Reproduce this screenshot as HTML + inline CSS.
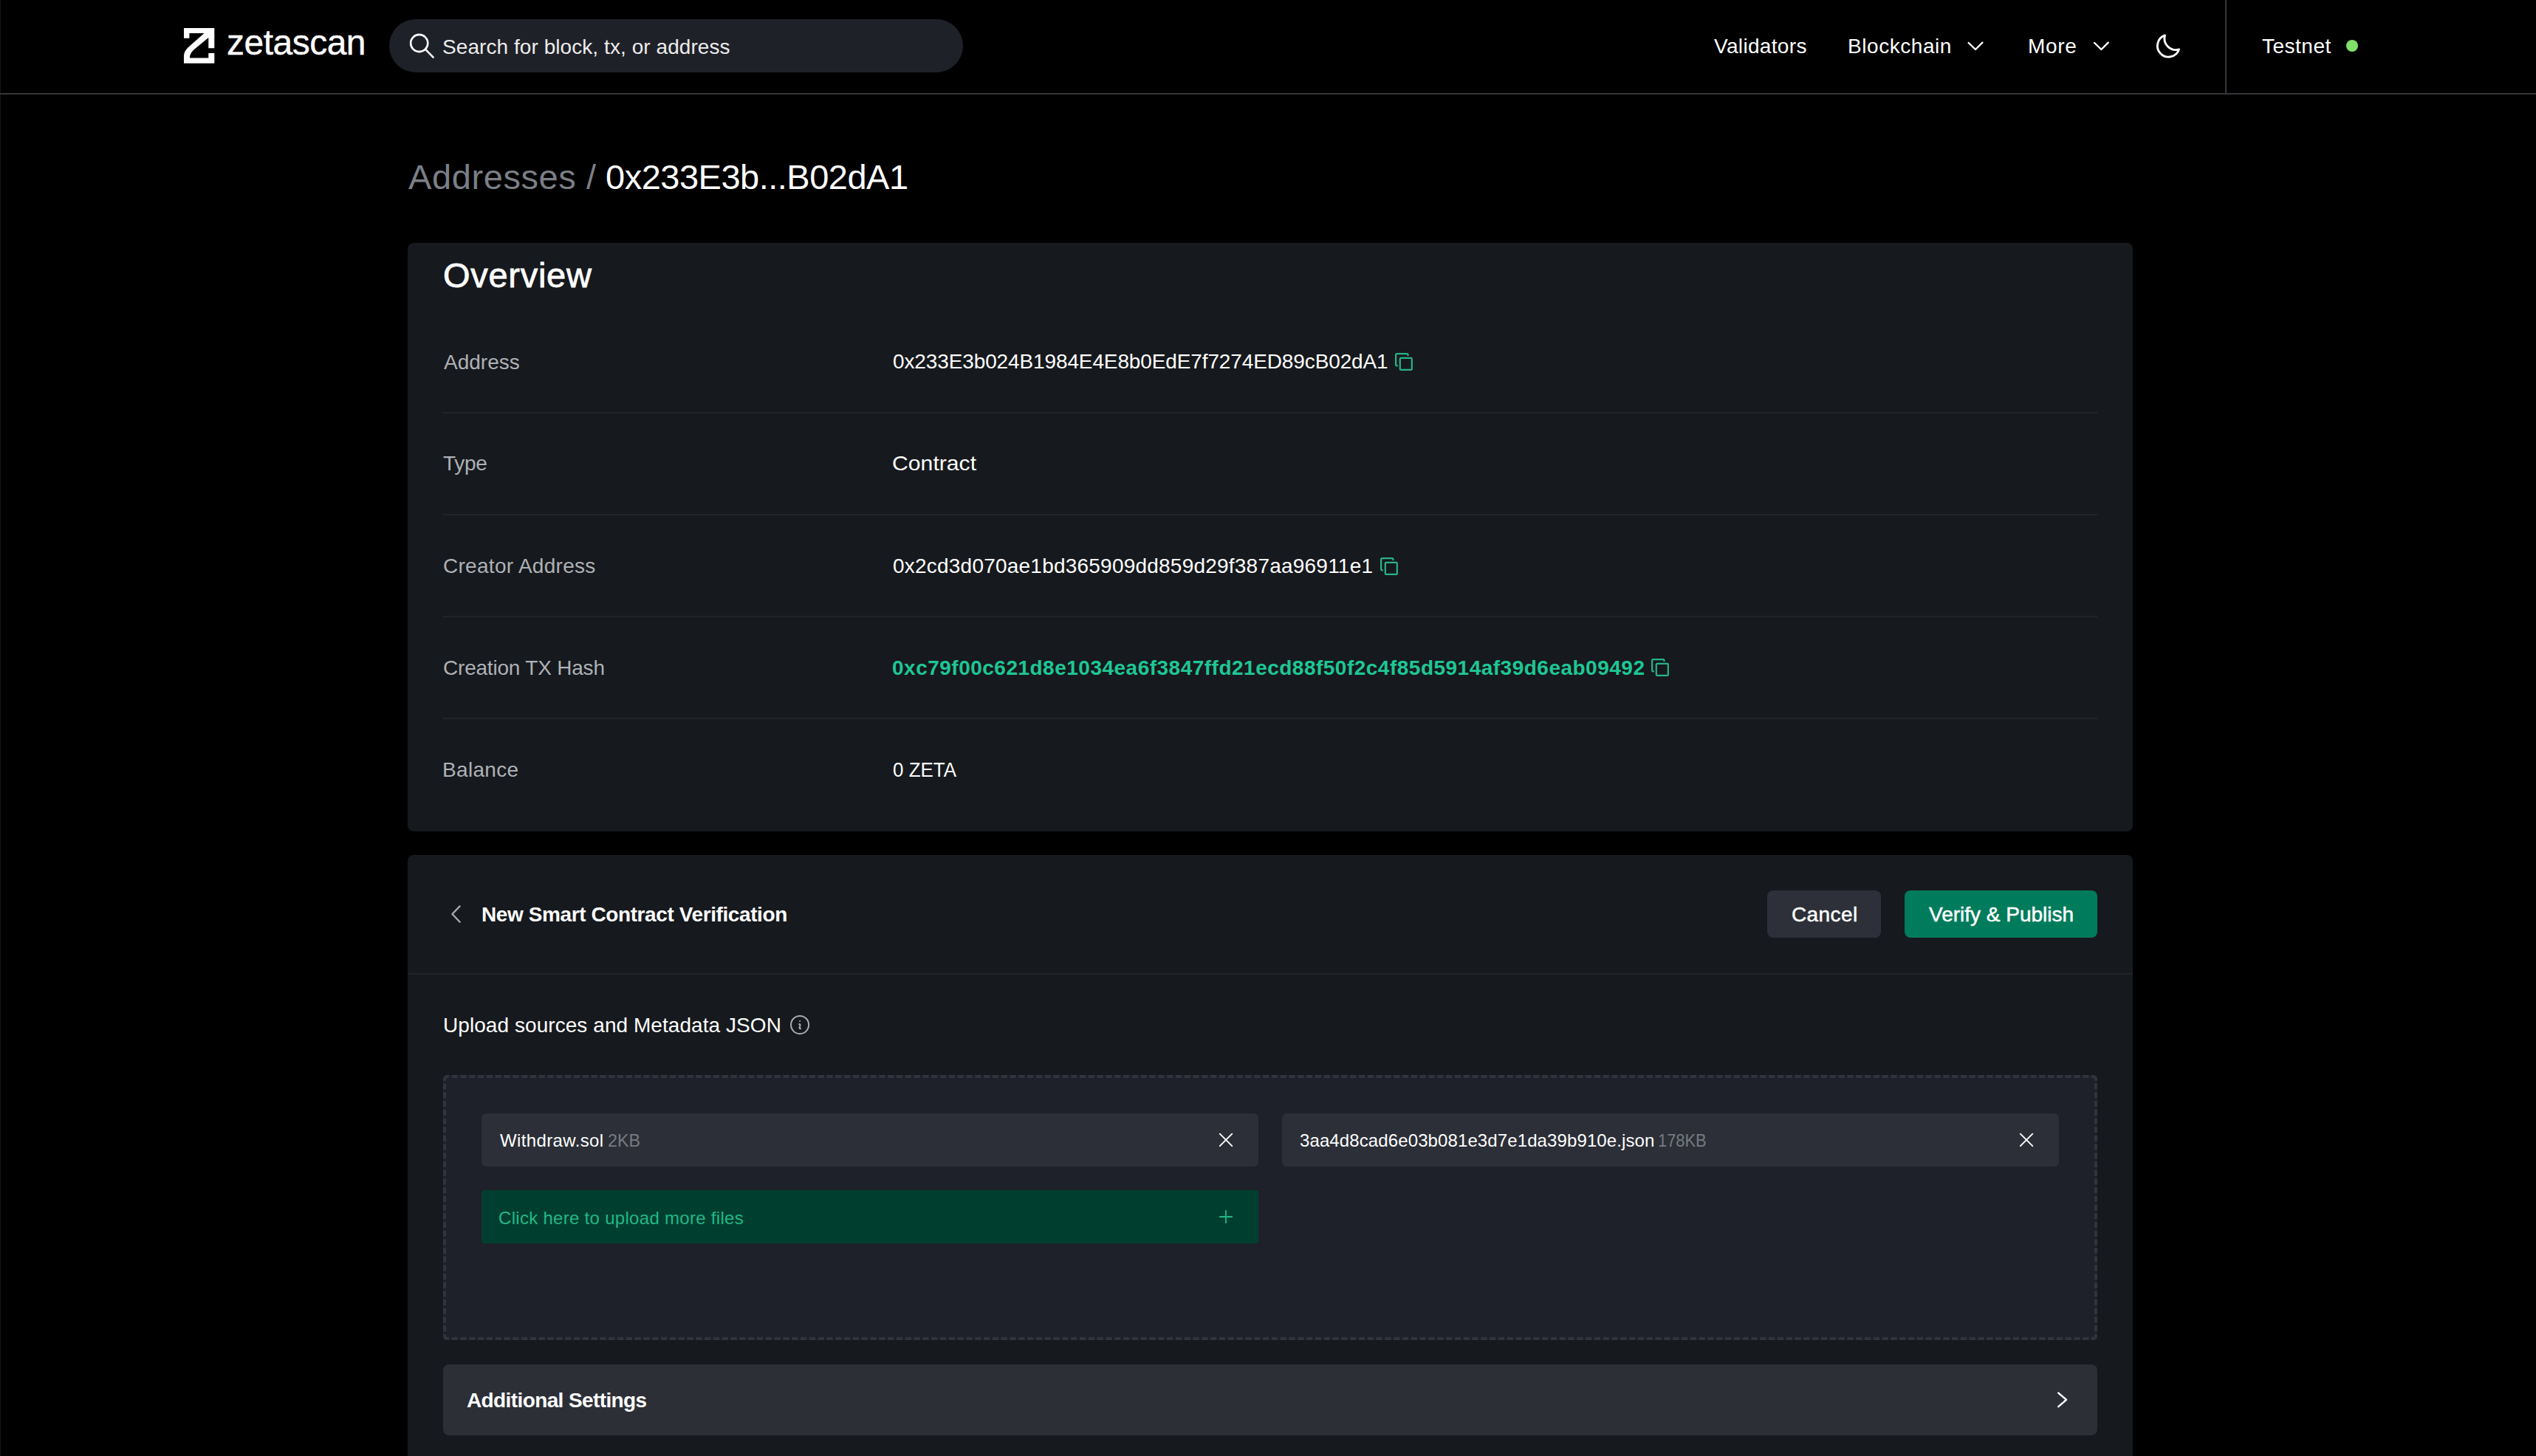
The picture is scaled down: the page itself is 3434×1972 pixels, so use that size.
<!DOCTYPE html>
<html><head>
<meta charset="utf-8">
<style>
html,body{margin:0;padding:0;}
body{width:3434px;height:1972px;background:#000;overflow:hidden;position:relative;font-family:"Liberation Sans",sans-serif;color:#fff;}
.a{position:absolute;}
.t{position:absolute;white-space:nowrap;}
.f28{font-size:28px;line-height:28px;}
.f24{font-size:24px;line-height:24px;}
.f47{font-size:47px;line-height:47px;}
svg{position:absolute;overflow:visible;}
.card{position:absolute;background:#16191d;border-radius:8px;}
.lbl{color:#aeb1b6;}
.div{position:absolute;height:2px;background:#212429;}
</style>
</head>
<body>
<!-- left hairline -->
<div class="a" style="left:0;top:0;width:1px;height:1972px;background:#161616"></div>

<!-- ============ NAV ============ -->
<svg style="left:248.7px;top:38px" width="41.3" height="47.8" viewBox="0 0 41.3 47.8">
  <path fill="#fff" fill-rule="nonzero" d="M0 0H41.3V7.1H0Z M0 0H7.4V13.8H0Z M33.3 0H41.3V27.2H33.3Z M33.3 33.9H41.3V47.8H33.3Z M0 40.4H41.3V47.8H0Z M0 37H7.8V47.8H0Z M27.5 7.1 L33.3 7.1 L33.3 12.9 L14.5 28.6 C10.5 32 8.2 35.5 7.8 40.4 L0 40.4 L0 37 C0.5 32 3 28.5 6 25.9 Z"></path>
</svg>
<div id="t_logo" class="t" style="-webkit-text-stroke: 0.4px rgb(255, 255, 255); left: 307px; top: 34px; font-size: 48px; line-height: 48px; letter-spacing: -0.513px;">zetascan</div>

<div class="a" style="left:527px;top:26px;width:777px;height:72px;border-radius:36px;background:#1f2128"></div>
<svg style="left:550px;top:42px" width="42" height="40" viewBox="0 0 42 40">
  <circle cx="17.7" cy="16.5" r="11.6" fill="none" stroke="#fff" stroke-width="2.6"></circle>
  <line x1="25.9" y1="24.7" x2="36.6" y2="35.6" stroke="#fff" stroke-width="2.6" stroke-linecap="round"></line>
</svg>
<div id="t_search" class="t f28" style="left: 599px; top: 49.5px; color: rgb(236, 236, 236); letter-spacing: 0.065px;">Search for block, tx, or address</div>

<div id="t_val" class="t f28" style="left: 2321px; top: 49.3px; letter-spacing: 0.333px;">Validators</div>
<div id="t_block" class="t f28" style="left: 2502px; top: 49.3px; letter-spacing: 0.555px;">Blockchain</div>
<svg style="left:2660px;top:52px" width="30" height="20" viewBox="0 0 30 20">
  <path d="M5.6 6 L15 15 L24.4 5.7" fill="none" stroke="#fff" stroke-width="2.4" stroke-linecap="round" stroke-linejoin="round"></path>
</svg>
<div id="t_more" class="t f28" style="left: 2746px; top: 49.3px; letter-spacing: 0.667px;">More</div>
<svg style="left:2830px;top:52px" width="30" height="20" viewBox="0 0 30 20">
  <path d="M6 6 L15.4 15 L24.8 5.7" fill="none" stroke="#fff" stroke-width="2.4" stroke-linecap="round" stroke-linejoin="round"></path>
</svg>
<svg style="left:2910px;top:38px" width="55" height="50" viewBox="0 0 55 50">
  <path d="M21.5 9.9 A15 15 0 1 0 40.6 28.9 A15.4 15.4 0 0 1 21.5 9.9 Z" fill="none" stroke="#fff" stroke-width="2.9" stroke-linejoin="round"></path>
</svg>
<div class="a" style="left:3013px;top:0;width:2px;height:126px;background:#36363a"></div>
<div id="t_test" class="t f28" style="left: 3063px; top: 49.3px; letter-spacing: 0.5px;">Testnet</div>
<div class="a" style="left:3177px;top:54px;width:16px;height:16px;border-radius:50%;background:#7fe16c"></div>
<div class="a" style="left:0;top:126px;width:3434px;height:2px;background:#36363a"></div>

<!-- ============ TITLE ============ -->
<div id="t_addrs" class="t f47" style="left: 553px; top: 216px; color: rgb(123, 127, 134); letter-spacing: 0.6px;">Addresses /</div>
<div id="t_short" class="t f47" style="left: 820px; top: 216px; letter-spacing: -0.502px;">0x233E3b...B02dA1</div>

<!-- ============ OVERVIEW CARD ============ -->
<div class="card" style="left:552px;top:329px;width:2336px;height:797px"></div>
<div id="t_over" class="t f47" style="-webkit-text-stroke: 0.8px rgb(255, 255, 255); left: 600px; top: 349px; letter-spacing: 0.714px;">Overview</div>

<div id="l_addr" class="t f28 lbl" style="left: 601px; top: 477px; letter-spacing: 0.004px;">Address</div>
<div id="v_addr" class="t f28" style="left: 1209px; top: 476px; letter-spacing: -0.122px;">0x233E3b024B1984E4E8b0EdE7f7274ED89cB02dA1</div>
<svg style="left:1888px;top:477px" width="28" height="28" viewBox="0 0 28 28">
  <path d="M4.9 18.3 H3.7 Q2.1 18.3 2.1 16.7 V3.7 Q2.1 2.1 3.7 2.1 H16.9 Q18.5 2.1 18.5 3.7 V4.9" fill="none" stroke="#29b386" stroke-width="2.2"></path>
  <rect x="7.8" y="7.8" width="16" height="16" rx="1.1" fill="none" stroke="#29b386" stroke-width="2.2"></rect>
</svg>
<div class="div" style="left:600px;top:558px;width:2240px"></div>

<div id="l_type" class="t f28 lbl" style="left: 600px; top: 614.3px; letter-spacing: -0.33px;">Type</div>
<div id="v_type" class="t f28" style="left: 1207.53px; top: 614.3px; letter-spacing: 0px; transform-origin: 0px 0px; transform: scaleX(1.0781);">Contract</div>
<div class="div" style="left:600px;top:696px;width:2240px"></div>

<div id="l_creator" class="t f28 lbl" style="left: 600px; top: 753px; letter-spacing: 0.287px;">Creator Address</div>
<div id="v_creator" class="t f28" style="left: 1209px; top: 753px; letter-spacing: 0.219px;">0x2cd3d070ae1bd365909dd859d29f387aa96911e1</div>
<svg style="left:1867.6px;top:753.6px" width="28" height="28" viewBox="0 0 28 28">
  <path d="M4.9 18.3 H3.7 Q2.1 18.3 2.1 16.7 V3.7 Q2.1 2.1 3.7 2.1 H16.9 Q18.5 2.1 18.5 3.7 V4.9" fill="none" stroke="#29b386" stroke-width="2.2"></path>
  <rect x="7.8" y="7.8" width="16" height="16" rx="1.1" fill="none" stroke="#29b386" stroke-width="2.2"></rect>
</svg>
<div class="div" style="left:600px;top:834px;width:2240px"></div>

<div id="l_ctx" class="t f28 lbl" style="left: 600px; top: 890.7px; letter-spacing: -0.204px;">Creation TX Hash</div>
<div id="v_ctx" class="t f28" style="left: 1208px; top: 890.7px; font-weight: 700; color: rgb(30, 199, 149); letter-spacing: 0.492px;">0xc79f00c621d8e1034ea6f3847ffd21ecd88f50f2c4f85d5914af39d6eab09492</div>
<svg style="left:2235px;top:890.8px" width="28" height="28" viewBox="0 0 28 28">
  <path d="M4.9 18.3 H3.7 Q2.1 18.3 2.1 16.7 V3.7 Q2.1 2.1 3.7 2.1 H16.9 Q18.5 2.1 18.5 3.7 V4.9" fill="none" stroke="#29b386" stroke-width="2.2"></path>
  <rect x="7.8" y="7.8" width="16" height="16" rx="1.1" fill="none" stroke="#29b386" stroke-width="2.2"></rect>
</svg>
<div class="div" style="left:600px;top:972px;width:2240px"></div>

<div id="l_bal" class="t f28 lbl" style="left: 599px; top: 1029px; letter-spacing: 0.331px;">Balance</div>
<div id="v_bal" class="t f28" style="left: 1208.8px; top: 1029px; letter-spacing: 0px; transform-origin: 0px 0px; transform: scaleX(0.927);">0 ZETA</div>

<!-- ============ VERIFY CARD ============ -->
<div class="card" style="left:552px;top:1158px;width:2336px;height:900px"></div>
<svg style="left:606px;top:1222px" width="24" height="32" viewBox="0 0 24 32">
  <path d="M16.6 5.4 L6.4 16 L16.7 26.7" fill="none" stroke="#a9acb1" stroke-width="2.3" stroke-linecap="round" stroke-linejoin="round"></path>
</svg>
<div id="t_new" class="t f28" style="left: 652px; top: 1224.5px; font-weight: 700; letter-spacing: -0.402px;">New Smart Contract Verification</div>

<div class="a" style="left:2393px;top:1206px;width:154px;height:64px;border-radius:8px;background:#2d3038"></div>
<div id="t_cancel" class="t f28" style="-webkit-text-stroke: 0.5px rgb(255, 255, 255); left: 2426px; top: 1225.4px; letter-spacing: 0.4px;">Cancel</div>
<div class="a" style="left:2579px;top:1206px;width:261px;height:64px;border-radius:8px;background:#007b5c"></div>
<div id="t_verify" class="t f28" style="-webkit-text-stroke: 0.5px rgb(255, 255, 255); left: 2612px; top: 1225.4px; letter-spacing: 0px;">Verify &amp; Publish</div>

<div class="a" style="left:552px;top:1318px;width:2336px;height:2px;background:#212429"></div>

<div id="t_upload" class="t f28" style="left: 600px; top: 1375.3px; letter-spacing: 0.061px;">Upload sources and Metadata JSON</div>
<svg style="left:1066.8px;top:1372px" width="32.16" height="32.16" viewBox="0 0 24 24">
  <path d="M11.25 11.25l.041-.02a.75.75 0 011.063.852l-.708 2.836a.75.75 0 001.063.853l.041-.021M21 12a9 9 0 11-18 0 9 9 0 0118 0zm-9-3.75h.008v.008H12V8.25z" fill="none" stroke="#a9acb1" stroke-width="1.5" stroke-linecap="round" stroke-linejoin="round"></path>
</svg>

<div class="a" style="left:600px;top:1456px;width:2240px;height:359px;border-radius:6px;background:#1e2129"></div>
<svg style="left:600px;top:1456px" width="2240" height="359" viewBox="0 0 2240 359">
  <path d="M2 8 V6 Q2 2 6 2 H8 M2232 2 H2234 Q2238 2 2238 6 V8 M2238 351 V353 Q2238 357 2234 357 H2232 M8 357 H6 Q2 357 2 353 V351" fill="none" stroke="#31343b" stroke-width="4"></path>
  <path d="M11.6 2 H2228.4 M11.6 357 H2228.4" fill="none" stroke="#31343b" stroke-width="4" stroke-dasharray="8.2 3.611"></path>
  <path d="M2 11.6 V347.4 M2238 11.6 V347.4" fill="none" stroke="#31343b" stroke-width="4" stroke-dasharray="8.2 3.500"></path>
</svg>

<div class="a" style="left:652px;top:1508px;width:1052px;height:72px;border-radius:6px;background:#2c2f37"></div>
<div id="t_w" class="t f24" style="left: 677px; top: 1532.7px; letter-spacing: 0.369px;">Withdraw.sol</div>
<div id="t_2kb" class="t f24" style="left: 823.02px; top: 1532.7px; color: rgb(119, 123, 130); letter-spacing: 0px; transform-origin: 0px 0px; transform: scaleX(0.9678);">2KB</div>
<svg style="left:1646px;top:1530px" width="28" height="28" viewBox="0 0 28 28">
  <path d="M5.8 5.7 L22.3 22.2 M22.3 5.7 L5.8 22.2" fill="none" stroke="#fff" stroke-width="1.9" stroke-linecap="round"></path>
</svg>

<div class="a" style="left:1736px;top:1508px;width:1052px;height:72px;border-radius:6px;background:#2c2f37"></div>
<div id="t_3aa" class="t f24" style="left: 1760px; top: 1532.7px; letter-spacing: 0.109px;">3aa4d8cad6e03b081e3d7e1da39b910e.json</div>
<div id="t_178" class="t f24" style="left: 2245.28px; top: 1532.7px; color: rgb(119, 123, 130); letter-spacing: 0px; transform-origin: 0px 0px; transform: scaleX(0.9115);">178KB</div>
<svg style="left:2730px;top:1530px" width="28" height="28" viewBox="0 0 28 28">
  <path d="M5.8 5.7 L22.3 22.2 M22.3 5.7 L5.8 22.2" fill="none" stroke="#fff" stroke-width="1.9" stroke-linecap="round"></path>
</svg>

<div class="a" style="left:652px;top:1612px;width:1052px;height:72px;border-radius:4px;background:#003f2f"></div>
<div id="t_click" class="t f24" style="left: 675px; top: 1637.6px; color: rgb(34, 184, 134); letter-spacing: 0.296px;">Click here to upload more files</div>
<svg style="left:1646px;top:1634px" width="28" height="28" viewBox="0 0 28 28">
  <path d="M14 5.8 V22.2 M5.8 14 H22.2" fill="none" stroke="#22b886" stroke-width="1.8" stroke-linecap="round"></path>
</svg>

<div class="a" style="left:600px;top:1848px;width:2240px;height:96px;border-radius:8px;background:#2c2f36"></div>
<div id="t_adds" class="t f28" style="left: 632px; top: 1883.3px; font-weight: 700; letter-spacing: -0.611px;">Additional Settings</div>
<svg style="left:2780px;top:1880px" width="26" height="32" viewBox="0 0 26 32">
  <path d="M7.3 6.6 L18 15.8 L7.3 25.1" fill="none" stroke="#fff" stroke-width="2.5" stroke-linecap="round" stroke-linejoin="round"></path>
</svg>



</body></html>
